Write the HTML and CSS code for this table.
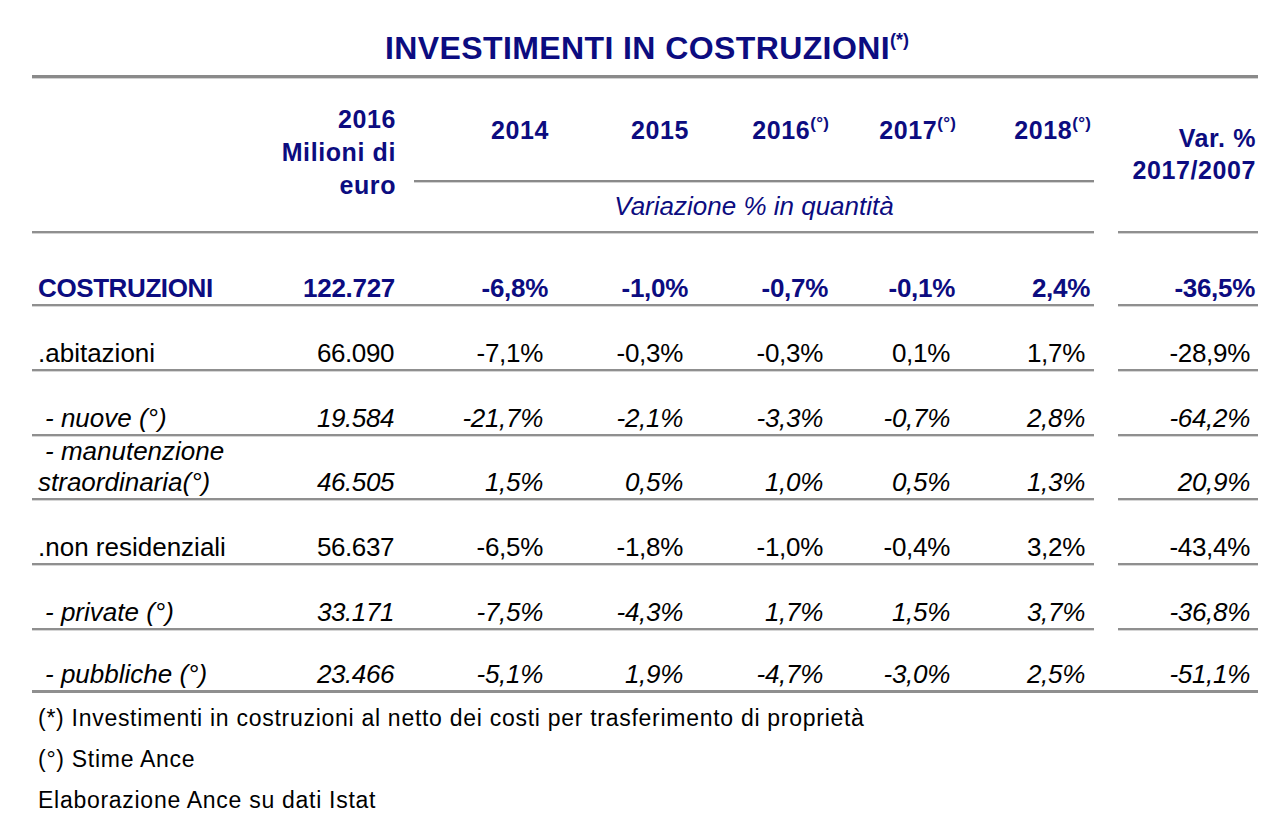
FILE: index.html
```html
<!DOCTYPE html>
<html lang="it">
<head>
<meta charset="utf-8">
<title>Investimenti in costruzioni</title>
<link rel="stylesheet" href="styles.css">
</head>
<body>
<div class="page">
  <h1 class="title">INVESTIMENTI IN COSTRUZIONI<sup class="title-sup">(*)</sup></h1>
  <div class="top-rule"></div>

  <div class="head">
    <div class="h-val">2016<br>Milioni di<br>euro</div>
    <div class="h-year y1">2014</div>
    <div class="h-year y2">2015</div>
    <div class="h-year y3">2016<sup class="sup">(°)</sup></div>
    <div class="h-year y4">2017<sup class="sup">(°)</sup></div>
    <div class="h-year y5">2018<sup class="sup">(°)</sup></div>
    <div class="h-var">Var. %<br>2017/2007</div>
    <div class="h-subrule"></div>
    <div class="h-variaz">Variazione % in quantità</div>
    <div class="h-rule-l"></div>
    <div class="h-rule-r"></div>
  </div>

  <div class="row bold r-costr">
    <div class="c lab">COSTRUZIONI</div>
    <div class="c n">122.727</div>
    <div class="c p">-6,8%</div>
    <div class="c p">-1,0%</div>
    <div class="c p">-0,7%</div>
    <div class="c p">-0,1%</div>
    <div class="c p6">2,4%</div>
    <div class="gap"></div>
    <div class="c p9">-36,5%</div>
  </div>

  <div class="row r-std">
    <div class="c lab">.abitazioni</div>
    <div class="c n">66.090</div>
    <div class="c p">-7,1%</div>
    <div class="c p">-0,3%</div>
    <div class="c p">-0,3%</div>
    <div class="c p">0,1%</div>
    <div class="c p6">1,7%</div>
    <div class="gap"></div>
    <div class="c p9">-28,9%</div>
  </div>

  <div class="row ital r-std">
    <div class="c lab ind">- nuove (°)</div>
    <div class="c n">19.584</div>
    <div class="c p">-21,7%</div>
    <div class="c p">-2,1%</div>
    <div class="c p">-3,3%</div>
    <div class="c p">-0,7%</div>
    <div class="c p6">2,8%</div>
    <div class="gap"></div>
    <div class="c p9">-64,2%</div>
  </div>

  <div class="row ital r-two">
    <div class="c lab"><span class="two"><span class="ind">- manutenzione</span><br>straordinaria(°)</span></div>
    <div class="c n">46.505</div>
    <div class="c p">1,5%</div>
    <div class="c p">0,5%</div>
    <div class="c p">1,0%</div>
    <div class="c p">0,5%</div>
    <div class="c p6">1,3%</div>
    <div class="gap"></div>
    <div class="c p9">20,9%</div>
  </div>

  <div class="row r-std">
    <div class="c lab">.non residenziali</div>
    <div class="c n">56.637</div>
    <div class="c p">-6,5%</div>
    <div class="c p">-1,8%</div>
    <div class="c p">-1,0%</div>
    <div class="c p">-0,4%</div>
    <div class="c p6">3,2%</div>
    <div class="gap"></div>
    <div class="c p9">-43,4%</div>
  </div>

  <div class="row ital r-std">
    <div class="c lab ind">- private (°)</div>
    <div class="c n">33.171</div>
    <div class="c p">-7,5%</div>
    <div class="c p">-4,3%</div>
    <div class="c p">1,7%</div>
    <div class="c p">1,5%</div>
    <div class="c p6">3,7%</div>
    <div class="gap"></div>
    <div class="c p9">-36,8%</div>
  </div>

  <div class="row ital r-last">
    <div class="c lab ind">- pubbliche (°)</div>
    <div class="c n">23.466</div>
    <div class="c p">-5,1%</div>
    <div class="c p">1,9%</div>
    <div class="c p">-4,7%</div>
    <div class="c p">-3,0%</div>
    <div class="c p6">2,5%</div>
    <div class="gap"></div>
    <div class="c p9">-51,1%</div>
  </div>

  <div class="notes">
    <p class="note">(*) Investimenti in costruzioni al netto dei costi per trasferimento di proprietà</p>
    <p class="note">(°) Stime Ance</p>
    <p class="note">Elaborazione Ance su dati Istat</p>
  </div>
</div>
</body>
</html>
```

FILE: styles.css
```css
* { box-sizing: border-box; }

html, body {
  margin: 0;
  padding: 0;
  background: #ffffff;
}

body {
  font-family: "Liberation Sans", Arial, Helvetica, sans-serif;
  color: #000000;
}

.page {
  --cols: 230px 138px 153px 140px 140px 127px 134px 24px 140px;
  width: 1226px;
  margin-left: 32px;
  padding-top: 30px;
}

.title {
  margin: 0;
  height: 36px;
  font-size: 32px;
  line-height: 36px;
  font-weight: bold;
  letter-spacing: 0.4px;
  color: #0c0c80;
  text-align: center;
  padding-left: 4px;
}

.title-sup {
  font-size: 18px;
  line-height: 0;
  vertical-align: 13px;
  letter-spacing: 0;
}

.top-rule {
  margin-top: 9px;
  height: 3px;
  background: #8a8a8a;
  box-shadow: 0 1px 0 #d2d2d2;
}

/* header */
.head {
  display: grid;
  grid-template-columns: var(--cols);
  grid-template-rows: 102px 2px auto 2px;
  color: #0c0c80;
  font-weight: bold;
  font-size: 25px;
  letter-spacing: 0.6px;
}

.h-val {
  grid-column: 2;
  grid-row: 1 / 4;
  padding-top: 25px;
  padding-right: 4px;
  line-height: 33px;
  text-align: right;
}

.h-year {
  grid-row: 1;
  padding-top: 36px;
  padding-right: 4px;
  line-height: 33px;
  text-align: right;
}
.y1 { grid-column: 3; }
.y2 { grid-column: 4; }
.y3 { grid-column: 5; }
.y4 { grid-column: 6; }
.y5 { grid-column: 7; padding-right: 3px; }

.sup {
  font-size: 17px;
  line-height: 0;
  vertical-align: 10px;
  letter-spacing: 0.2px;
}

.h-var {
  grid-column: 9;
  grid-row: 1 / 4;
  padding-top: 44px;
  padding-right: 2px;
  line-height: 32px;
  text-align: right;
}

.h-subrule {
  grid-column: 3 / 8;
  grid-row: 2;
  margin-left: 14px;
  background: #8a8a8a;
  box-shadow: 0 1px 0 #d2d2d2;
}

.h-variaz {
  grid-column: 3 / 8;
  grid-row: 3;
  padding: 8px 0 9px 14px;
  line-height: 32px;
  text-align: center;
  font-weight: normal;
  font-style: italic;
  font-size: 26px;
  letter-spacing: 0;
}

.h-rule-l {
  grid-column: 1 / 8;
  grid-row: 4;
  background: #8f8f8f;
  box-shadow: 0 1px 0 #d2d2d2;
}
.h-rule-r {
  grid-column: 9;
  grid-row: 4;
  background: #8f8f8f;
  box-shadow: 0 1px 0 #d2d2d2;
}

/* body rows */
.row {
  display: grid;
  grid-template-columns: var(--cols);
  font-size: 26px;
}

.c {
  display: flex;
  align-items: flex-end;
  justify-content: flex-end;
  line-height: 32px;
  border-bottom: 2px solid #8f8f8f;
  box-shadow: 0 1px 0 #d6d6d6;
  white-space: nowrap;
}

.lab {
  justify-content: flex-start;
  padding-left: 6px;
}
.ind { padding-left: 7px; }
.lab.ind { padding-left: 13px; }
.two .ind { display: inline-block; padding-left: 7px; }

.n { padding-right: 6px; letter-spacing: -0.4px; }
.p { padding-right: 10px; letter-spacing: -0.3px; }
.p6 { padding-right: 9px; letter-spacing: -0.3px; }
.p9 { padding-right: 8px; letter-spacing: -0.3px; }

.bold {
  font-weight: bold;
  color: #0c0c80;
}
.bold .lab { letter-spacing: -0.4px; }
.bold .n { padding-right: 5px; letter-spacing: -0.3px; }
.bold .p { padding-right: 5px; }
.bold .p6 { padding-right: 4px; }
.bold .p9 { padding-right: 3px; }

.ital { font-style: italic; }

.r-costr .c { padding-top: 39px; }
.r-std .c { padding-top: 31px; }
.r-two .c { padding-top: 0; line-height: 31px; }
.r-last .c { padding-top: 28px; border-bottom-width: 3px; box-shadow: none; }
.r-last .gap { border-bottom: 3px solid #8f8f8f; }

/* notes */
.notes {
  margin-top: 5px;
  padding-left: 6px;
}
.note {
  margin: 0;
  font-size: 23px;
  line-height: 41px;
  letter-spacing: 0.72px;
}
```
